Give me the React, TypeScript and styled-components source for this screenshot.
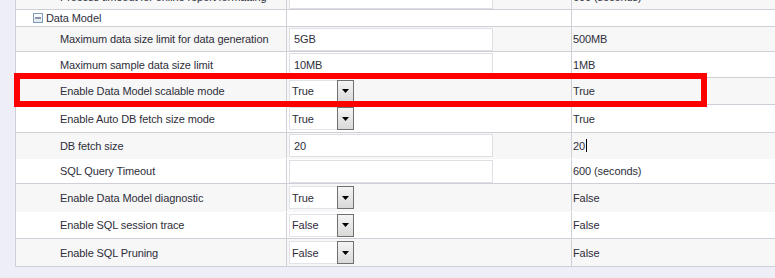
import React from 'react';
import styled, { createGlobalStyle } from 'styled-components';

const GlobalStyle = createGlobalStyle`
  html, body {
    margin: 0;
    padding: 0;
    background: #eeeef6;
  }
  body {
    font-family: 'Liberation Sans', 'DejaVu Sans', sans-serif;
  }
`;

type Kind = 'text' | 'select' | 'group';

interface Row {
  label: string;
  kind: Kind;
  value?: string;
  def: string;
  height: number;
  grey: boolean;
  line: boolean;
  caret?: boolean;
}

const rows: Row[] = [
  { label: 'Process timeout for online report formatting', kind: 'text', value: '', def: '600 (seconds)', height: 25, grey: true, line: true },
  { label: 'Data Model', kind: 'group', def: '', height: 17, grey: false, line: true },
  { label: 'Maximum data size limit for data generation', kind: 'text', value: '5GB', def: '500MB', height: 25, grey: true, line: true },
  { label: 'Maximum sample data size limit', kind: 'text', value: '10MB', def: '1MB', height: 26, grey: false, line: true },
  { label: 'Enable Data Model scalable mode', kind: 'select', value: 'True', def: 'True', height: 27, grey: true, line: true },
  { label: 'Enable Auto DB fetch size mode', kind: 'select', value: 'True', def: 'True', height: 28, grey: false, line: true },
  { label: 'DB fetch size', kind: 'text', value: '20', def: '20', height: 26, grey: true, line: false, caret: true },
  { label: 'SQL Query Timeout', kind: 'text', value: '', def: '600 (seconds)', height: 25, grey: false, line: true },
  { label: 'Enable Data Model diagnostic', kind: 'select', value: 'True', def: 'False', height: 28, grey: true, line: false },
  { label: 'Enable SQL session trace', kind: 'select', value: 'False', def: 'False', height: 27, grey: false, line: true },
  { label: 'Enable SQL Pruning', kind: 'select', value: 'False', def: 'False', height: 28, grey: true, line: true },
];

const Page = styled.div`
  position: relative;
  height: 278px;
  overflow: hidden;
  padding-left: 15px;
`;

const Table = styled.div`
  margin-top: -15px;
  border-left: 1px solid #cfcfd8;
  background: #ffffff;
`;

const RowBox = styled.div<{ $h: number; $grey: boolean; $line: boolean }>`
  display: grid;
  grid-template-columns: 271px 285px 1fr;
  height: ${(p) => p.$h}px;
  box-sizing: border-box;
  background: ${(p) => (p.$grey ? '#f7f7f7' : '#ffffff')};
  border-bottom: 1px solid ${(p) => (p.$line ? '#cfcfd8' : 'transparent')};
`;

const Cell = styled.div`
  display: flex;
  align-items: center;
  font-size: 11px;
  letter-spacing: -0.1px;
  color: #2e2e3a;
  white-space: nowrap;
  overflow: hidden;
`;

const LabelCell = styled(Cell)<{ $group: boolean }>`
  padding-left: ${(p) => (p.$group ? '17px' : '44px')};
  border-right: 1px solid #cfcfd8;
  gap: 3px;
`;

const ValueCell = styled(Cell)`
  padding-left: 2px;
  border-right: 1px solid #cfcfd8;
`;

const DefaultCell = styled(Cell)`
  padding-left: 1px;
`;

const TextInput = styled.div`
  box-sizing: border-box;
  width: 204px;
  height: 23px;
  border: 1px solid #dedee4;
  background: #ffffff;
  padding-left: 4px;
  display: flex;
  align-items: center;
`;

const Select = styled.div`
  box-sizing: border-box;
  width: 65px;
  height: 23px;
  display: flex;
  background: #ffffff;
  border: 1px solid #e2e2e8;
`;

const SelectText = styled.div`
  flex: 1;
  display: flex;
  align-items: center;
  padding-left: 2px;
`;

const SelectButton = styled.div`
  box-sizing: border-box;
  width: 17px;
  margin: -1px -1px -1px 0;
  border: 1px solid #707070;
  background: linear-gradient(#f4f4f4, #d9d9d9);
  display: flex;
  align-items: center;
  justify-content: center;
`;

const Caret = styled.span`
  display: inline-block;
  width: 1px;
  height: 13px;
  background: #000;
  margin-left: 1px;
`;

const Highlight = styled.div`
  position: absolute;
  left: 14px;
  top: 73px;
  width: 693px;
  height: 34px;
  box-sizing: border-box;
  border: 6px solid #ff0000;
  pointer-events: none;
`;

const MinusBox = () => (
  <svg width="10" height="10" viewBox="0 0 10 10">
    <defs>
      <linearGradient id="mb" x1="0" y1="0" x2="0" y2="1">
        <stop offset="0" stopColor="#ffffff" />
        <stop offset="1" stopColor="#dfe6ee" />
      </linearGradient>
    </defs>
    <rect x="0.5" y="0.5" width="9" height="9" fill="url(#mb)" stroke="#7f9db9" />
    <rect x="2" y="4.5" width="6" height="1" fill="#2a3a55" />
  </svg>
);

const DownArrow = () => (
  <svg width="7" height="4" viewBox="0 0 7 4">
    <path d="M0 0h7L3.5 4z" fill="#000" />
  </svg>
);

const App = () => (
  <>
    <GlobalStyle />
    <Page>
      <Table>
        {rows.map((r, i) => (
          <RowBox key={i} $h={r.height} $grey={r.grey} $line={r.line}>
            <LabelCell $group={r.kind === 'group'}>
              {r.kind === 'group' && <MinusBox />}
              {r.label}
            </LabelCell>
            <ValueCell>
              {r.kind === 'text' && <TextInput>{r.value}</TextInput>}
              {r.kind === 'select' && (
                <Select>
                  <SelectText>{r.value}</SelectText>
                  <SelectButton>
                    <DownArrow />
                  </SelectButton>
                </Select>
              )}
            </ValueCell>
            <DefaultCell>
              {r.def}
              {r.caret && <Caret />}
            </DefaultCell>
          </RowBox>
        ))}
      </Table>
      <Highlight />
    </Page>
  </>
);

export default App;
